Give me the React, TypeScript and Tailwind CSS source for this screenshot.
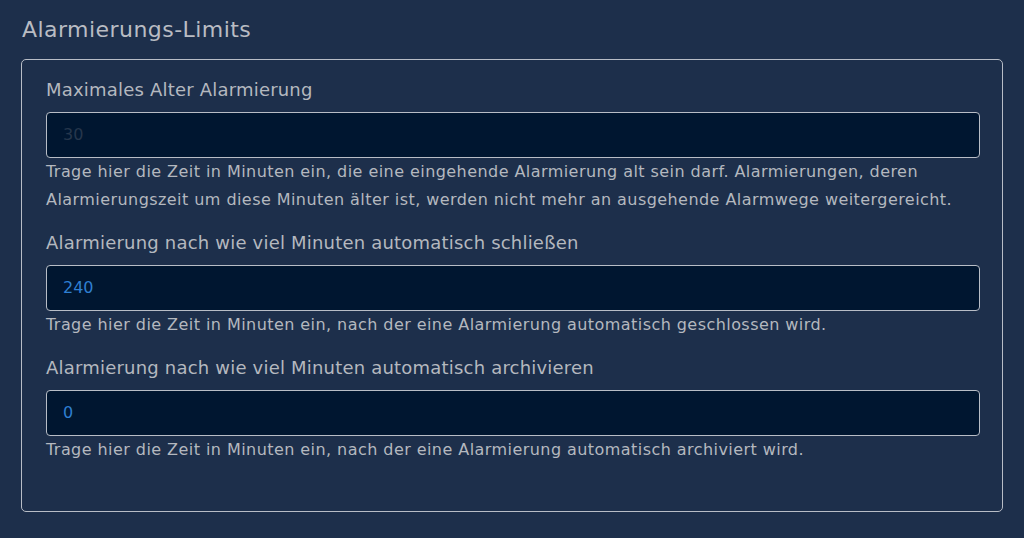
export default function App() {
  const font = { fontFamily: "'DejaVu Sans', 'Noto Sans', sans-serif" };
  return (
    <div className="w-[1024px] h-[538px] bg-[#1d2f4b] text-[#b4b8bf] px-[21px] pt-[14px]" style={font}>
      <h2 className="text-[22px] leading-[32px] tracking-[0.45px] ml-px mb-[13px] text-[#b9bcc3]">Alarmierungs-Limits</h2>
      <div className="w-[982px] h-[453px] border border-[#b8bdc6] rounded-[5px] pl-6 pr-[22px] pt-[18px]">
        <Field label="Maximales Alter Alarmierung" value="30" dim>
          Trage hier die Zeit in Minuten ein, die eine eingehende Alarmierung alt sein darf. Alarmierungen, deren
          <br />
          Alarmierungszeit um diese Minuten älter ist, werden nicht mehr an ausgehende Alarmwege weitergereicht.
        </Field>
        <Field label="Alarmierung nach wie viel Minuten automatisch schließen" value="240">
          Trage hier die Zeit in Minuten ein, nach der eine Alarmierung automatisch geschlossen wird.
        </Field>
        <Field label="Alarmierung nach wie viel Minuten automatisch archivieren" value="0">
          Trage hier die Zeit in Minuten ein, nach der eine Alarmierung automatisch archiviert wird.
        </Field>
      </div>
    </div>
  );
}

function Field({ label, value, dim, children }: { label: string; value: string; dim?: boolean; children: React.ReactNode }) {
  return (
    <div className="mb-[17px]">
      <label className="block text-[18px] leading-[24px] tracking-[0.2px] mb-[10px]">{label}</label>
      <div className="h-[46px] bg-[#001630] border border-[#b8bdc6] rounded-[4px] flex items-center px-4">
        <span className={dim ? "text-[16px] text-[#26364c]" : "text-[16px] text-[#2f7fd1]"}>{value}</span>
      </div>
      <p className="text-[16px] leading-[28px] tracking-[0.44px] whitespace-nowrap">{children}</p>
    </div>
  );
}
